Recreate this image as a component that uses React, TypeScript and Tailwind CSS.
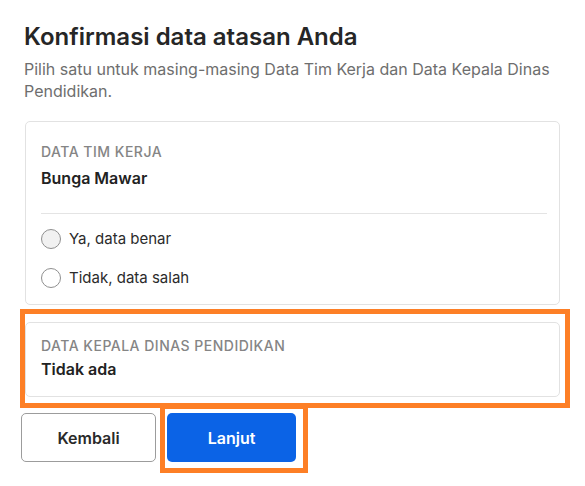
export default function App() {
  return (
    <div className="relative w-[585px] h-[486px] bg-white font-['Inter',sans-serif] text-[#242424]">
      <div className="pl-[24px] pt-[22px]">
        {/* Header */}
        <h1 className="text-[24px] leading-[30px] font-semibold text-[#262626]">
          Konfirmasi data atasan Anda
        </h1>
        <p className="mt-[6px] w-[537px] text-[16px] leading-[22px] text-[#6e6e6e]">
          Pilih satu untuk masing-masing Data Tim Kerja dan Data Kepala Dinas Pendidikan.
        </p>

        {/* Data Tim Kerja */}
        <div className="mt-[19px] ml-[1px] w-[535px] rounded-[5px] border border-[#e2e2e2] px-[15px] pt-[21px] pb-[16px]">
          <div className="text-[14px] leading-[18px] font-medium uppercase tracking-[0.035em] text-[#858585]">
            Data Tim Kerja
          </div>
          <div className="mt-[6px] text-[16px] leading-[22px] font-semibold text-[#222]">Bunga Mawar</div>
          <div className="mt-[24px] mr-[-3px] h-px bg-[#e4e4e4]" />
          <label className="mt-[15px] flex items-center gap-[8px]">
            <span className="h-[20px] w-[20px] rounded-full border border-[#8f8f8f] bg-[#f1f1f1]" />
            <span className="text-[15px] leading-[20px] text-[#2b2b2b]">Ya, data benar</span>
          </label>
          <label className="mt-[19px] flex items-center gap-[8px]">
            <span className="h-[20px] w-[20px] rounded-full border border-[#8f8f8f] bg-white" />
            <span className="text-[15px] leading-[20px] text-[#2b2b2b]">Tidak, data salah</span>
          </label>
        </div>

        {/* Data Kepala Dinas */}
        <div className="mt-[17px] ml-[1px] w-[535px] rounded-[5px] border border-[#e2e2e2] px-[15px] pt-[14px] pb-[16px]">
          <div className="text-[14px] leading-[18px] font-medium uppercase tracking-[0.035em] text-[#858585]">
            Data Kepala Dinas Pendidikan
          </div>
          <div className="mt-[3px] text-[16px] leading-[22px] font-semibold text-[#222]">Tidak ada</div>
        </div>

        {/* Actions */}
        <div className="mt-[16px] ml-[-3px] flex gap-[11px]">
          <button className="h-[49px] w-[135px] rounded-[5px] border border-[#9c9c9c] bg-white text-[16px] font-semibold text-[#2a2a2a]">
            Kembali
          </button>
          <button className="h-[49px] w-[129px] rounded-[5px] bg-[#0b63e6] text-[16px] font-semibold text-white">
            Lanjut
          </button>
        </div>
      </div>

      {/* Highlight overlays */}
      <div className="pointer-events-none absolute left-[20px] top-[309px] h-[99px] w-[550px] border-[5px] border-[#fd7f26]" />
      <div className="pointer-events-none absolute left-[160px] top-[404px] h-[69px] w-[148px] border-[5px] border-[#fd7f26]" />
    </div>
  );
}
